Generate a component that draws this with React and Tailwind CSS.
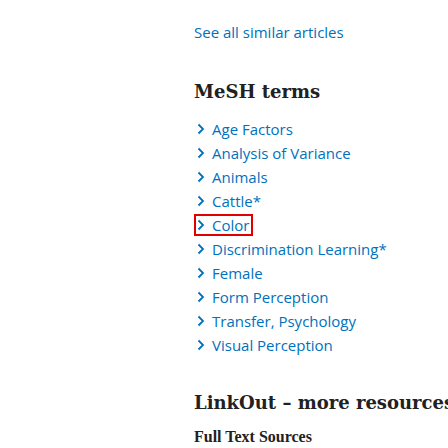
import React from "react";

const terms = [
  "Age Factors",
  "Analysis of Variance",
  "Animals",
  "Cattle*",
  "Color",
  "Discrimination Learning*",
  "Female",
  "Form Perception",
  "Transfer, Psychology",
  "Visual Perception",
];

function Chevron() {
  return (
    <svg width="8" height="12" viewBox="0 0 8 12" className="shrink-0 block">
      <path d="M1.5 1.5 L6 6 L1.5 10.5" fill="none" stroke="#0071bc" strokeWidth="1.8" />
    </svg>
  );
}

export default function App() {
  return (
    <div className="w-[448px] h-[448px] overflow-hidden bg-white flex flex-col pl-[194px] pt-[21px]">
      <div className="text-[15px] leading-[22px] text-[#0071bc]" style={{ fontFamily: '"Open Sans", sans-serif' }}>
        See all similar articles
      </div>
      <div
        className="mt-[36px] text-[18px] leading-[26px] font-bold text-[#212121] whitespace-nowrap"
        style={{ fontFamily: '"DejaVu Serif", serif' }}
      >
        MeSH terms
      </div>
      <div className="mt-[12px] flex flex-col items-start" style={{ fontFamily: '"Open Sans", sans-serif' }}>
        {terms.map((t) =>
          t === "Color" ? (
            <div key={t} className="h-[24px] flex items-center">
              <div className="h-[22px] flex items-center pr-[2px] border-2 border-[#e00000]">
                <div className="w-[16px] flex pl-[1px]">
                  <Chevron />
                </div>
                <div className="text-[15px] text-[#0071bc] leading-[18px] whitespace-nowrap">{t}</div>
              </div>
            </div>
          ) : (
            <div key={t} className="h-[24px] flex items-center">
              <div className="w-[18px] flex pl-[3px]">
                <Chevron />
              </div>
              <div className="text-[15px] text-[#0071bc] leading-[22px] whitespace-nowrap">{t}</div>
            </div>
          )
        )}
      </div>
      <div
        className="mt-[33px] text-[18px] leading-[26px] font-bold text-[#212121] whitespace-nowrap"
        style={{ fontFamily: '"DejaVu Serif", serif' }}
      >
        LinkOut – more resources
      </div>
      <div
        className="mt-[11px] text-[16px] leading-[20px] font-bold text-[#212121] whitespace-nowrap"
        style={{ fontFamily: '"Liberation Serif", serif' }}
      >
        Full Text Sources
      </div>
    </div>
  );
}
